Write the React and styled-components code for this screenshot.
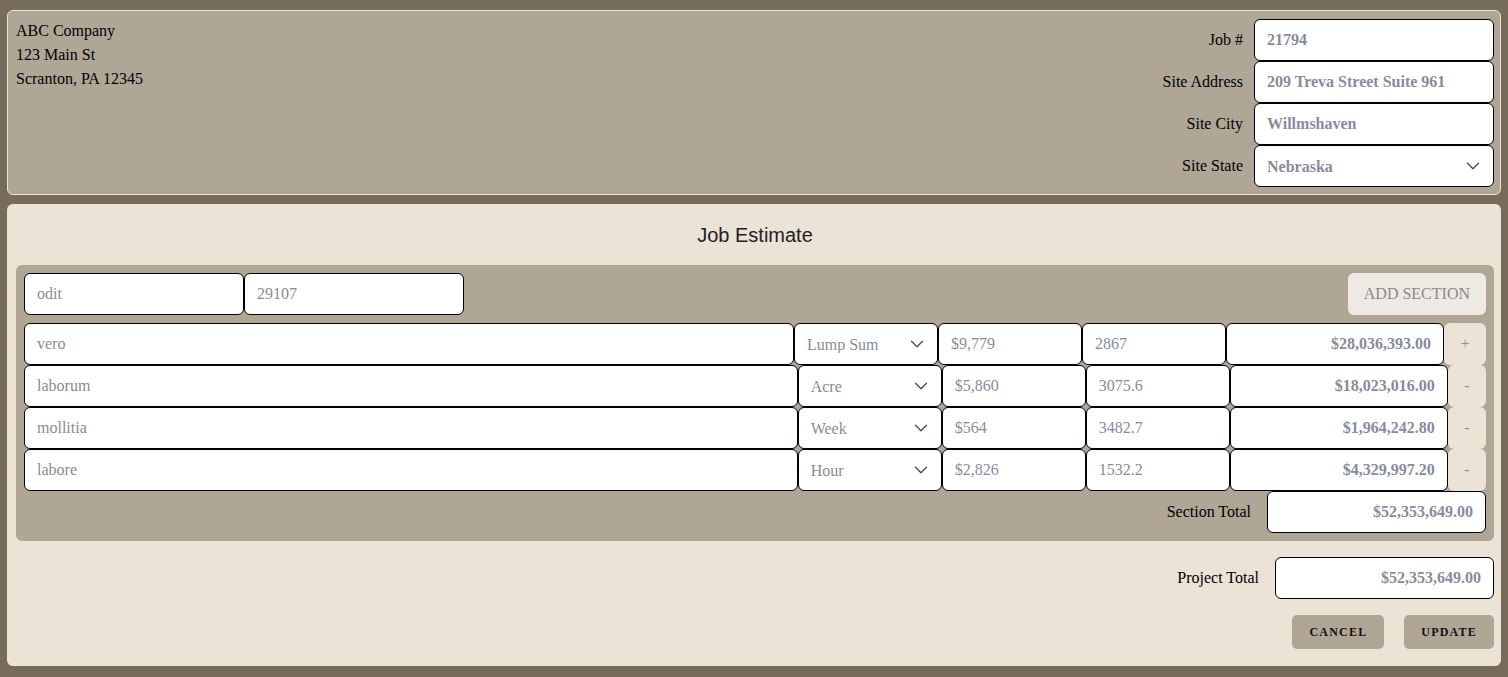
import React from 'react';
import styled, { createGlobalStyle } from 'styled-components';
import { ChevronDown } from 'lucide-react';

const GlobalStyle = createGlobalStyle`
  html, body {
    margin: 0;
    padding: 0;
    background: #776b5d;
  }
  body {
    font-family: "Liberation Serif", "Times New Roman", serif;
    font-size: 16px;
    color: #000;
  }
  * {
    box-sizing: border-box;
  }
`;

const lines = [
  { desc: 'vero', unit: 'Lump Sum', price: '$9,779', qty: '2867', total: '$28,036,393.00', action: '+' },
  { desc: 'laborum', unit: 'Acre', price: '$5,860', qty: '3075.6', total: '$18,023,016.00', action: '-' },
  { desc: 'mollitia', unit: 'Week', price: '$564', qty: '3482.7', total: '$1,964,242.80', action: '-' },
  { desc: 'labore', unit: 'Hour', price: '$2,826', qty: '1532.2', total: '$4,329,997.20', action: '-' },
];

const units = ['Lump Sum', 'Hour', 'Day', 'Week', 'Acre'];

function Select({ value, bold, width }) {
  return (
    <SelectWrap $width={width}>
      <SelectBox defaultValue={value} $bold={bold}>
        {units.includes(value) ? (
          units.map((u) => (
            <option key={u} value={u}>
              {u}
            </option>
          ))
        ) : (
          <option value={value}>{value}</option>
        )}
      </SelectBox>
      <Chevron>
        <ChevronDown size={22} strokeWidth={1.5} />
      </Chevron>
    </SelectWrap>
  );
}

export default function App() {
  return (
    <>
      <GlobalStyle />
      <Page>
        <Header>
          <Company>
            <div>ABC Company</div>
            <div>123 Main St</div>
            <div>Scranton, PA 12345</div>
          </Company>
          <SiteForm>
            <FieldLabel>Job #</FieldLabel>
            <Field $bold defaultValue="21794" />
            <FieldLabel>Site Address</FieldLabel>
            <Field $bold defaultValue="209 Treva Street Suite 961" />
            <FieldLabel>Site City</FieldLabel>
            <Field $bold defaultValue="Willmshaven" />
            <FieldLabel>Site State</FieldLabel>
            <Select value="Nebraska" bold />
          </SiteForm>
        </Header>

        <Estimate>
          <Title>Job Estimate</Title>
          <Section>
            <SectionHead>
              <Field $width="220px" defaultValue="odit" />
              <Field $width="220px" defaultValue="29107" />
              <AddButton type="button">Add Section</AddButton>
            </SectionHead>
            {lines.map((l) => (
              <LineRow key={l.desc}>
                <Field $grow defaultValue={l.desc} />
                <Select value={l.unit} width="144px" />
                <Field $width="144px" defaultValue={l.price} />
                <Field $width="144px" defaultValue={l.qty} />
                <Field $width="218px" $bold $right defaultValue={l.total} />
                <RowButton type="button">{l.action}</RowButton>
              </LineRow>
            ))}
            <TotalRow>
              <span>Section Total</span>
              <Field $width="219px" $bold $right defaultValue="$52,353,649.00" />
            </TotalRow>
          </Section>

          <TotalRow $spaced>
            <span>Project Total</span>
            <Field $width="219px" $bold $right defaultValue="$52,353,649.00" />
          </TotalRow>

          <Actions>
            <ActionButton type="button">Cancel</ActionButton>
            <ActionButton type="button">Update</ActionButton>
          </Actions>
        </Estimate>
      </Page>
    </>
  );
}

const Page = styled.div`
  padding: 10px 7px 11px;
  display: flex;
  flex-direction: column;
  gap: 9px;
`;

const Header = styled.div`
  display: flex;
  justify-content: space-between;
  align-items: flex-start;
  background: #b0a695;
  border: 1px solid #ebe3d5;
  border-radius: 6px;
  padding: 8px 6px 7px 8px;
`;

const Company = styled.div`
  line-height: 24px;
`;

const SiteForm = styled.div`
  display: grid;
  grid-template-columns: auto 240px;
  column-gap: 11px;
  align-items: center;
`;

const FieldLabel = styled.label`
  text-align: right;
`;

const Field = styled.input`
  height: 42px;
  width: ${(p) => p.$width || '100%'};
  flex: ${(p) => (p.$grow ? '1 1 0' : '0 0 auto')};
  min-width: 0;
  margin: 0;
  padding: 0 12px;
  border: 1px solid #000;
  border-radius: 6px;
  background: #fff;
  font-family: "Liberation Serif", "Times New Roman", serif;
  font-size: 16px;
  font-weight: ${(p) => (p.$bold ? 700 : 400)};
  text-align: ${(p) => (p.$right ? 'right' : 'left')};
  color: #878c9b;
  outline: none;
`;

const SelectWrap = styled.div`
  position: relative;
  width: ${(p) => p.$width || '100%'};
  flex: 0 0 auto;
`;

const SelectBox = styled.select`
  appearance: none;
  -webkit-appearance: none;
  display: block;
  width: 100%;
  height: 42px;
  margin: 0;
  padding: 0 36px 0 12px;
  border: 1px solid #000;
  border-radius: 6px;
  background: #fff;
  font-family: "Liberation Serif", "Times New Roman", serif;
  font-size: 16px;
  font-weight: ${(p) => (p.$bold ? 700 : 400)};
  color: #878c9b;
  outline: none;
`;

const Chevron = styled.span`
  position: absolute;
  right: 10px;
  top: 50%;
  transform: translateY(-50%);
  display: flex;
  color: #4f4f4f;
  pointer-events: none;
`;

const Estimate = styled.div`
  background: #ebe3d5;
  border-radius: 6px;
  padding: 0 7px 17px 9px;
  display: flex;
  flex-direction: column;
`;

const Title = styled.h2`
  margin: 0;
  padding: 20px 0 18px;
  text-align: center;
  font-family: "Liberation Sans", Arial, sans-serif;
  font-size: 20px;
  line-height: 23px;
  font-weight: 400;
  color: #222;
`;

const Section = styled.div`
  background: #b0a695;
  border-radius: 6px;
  padding: 8px;
  display: flex;
  flex-direction: column;
`;

const SectionHead = styled.div`
  display: flex;
  margin-bottom: 8px;
`;

const AddButton = styled.button`
  margin-left: auto;
  height: 42px;
  padding: 0 16px;
  border: none;
  border-radius: 6px;
  background: #efe9e3;
  color: #8a8a8c;
  font-family: "Liberation Serif", "Times New Roman", serif;
  font-size: 16px;
  text-transform: uppercase;
`;

const LineRow = styled.div`
  display: flex;
  height: 42px;
`;

const RowButton = styled.button`
  flex: 0 0 auto;
  height: 42px;
  padding: 0 16.5px;
  border: none;
  border-radius: 6px;
  background: #ebe3d5;
  color: #8c909a;
  font-family: "Liberation Serif", "Times New Roman", serif;
  font-size: 16px;
`;

const TotalRow = styled.div`
  display: flex;
  justify-content: flex-end;
  align-items: center;
  gap: 16px;
  margin-top: ${(p) => (p.$spaced ? '16px' : '0')};
`;

const Actions = styled.div`
  display: flex;
  justify-content: flex-end;
  gap: 20px;
  margin-top: 16px;
`;

const ActionButton = styled.button`
  height: 34px;
  padding: 0 17px;
  border: none;
  border-radius: 5px;
  background: #b0a695;
  color: #111;
  font-family: "Liberation Serif", "Times New Roman", serif;
  font-size: 12px;
  font-weight: 700;
  letter-spacing: 1.2px;
  text-transform: uppercase;
`;
